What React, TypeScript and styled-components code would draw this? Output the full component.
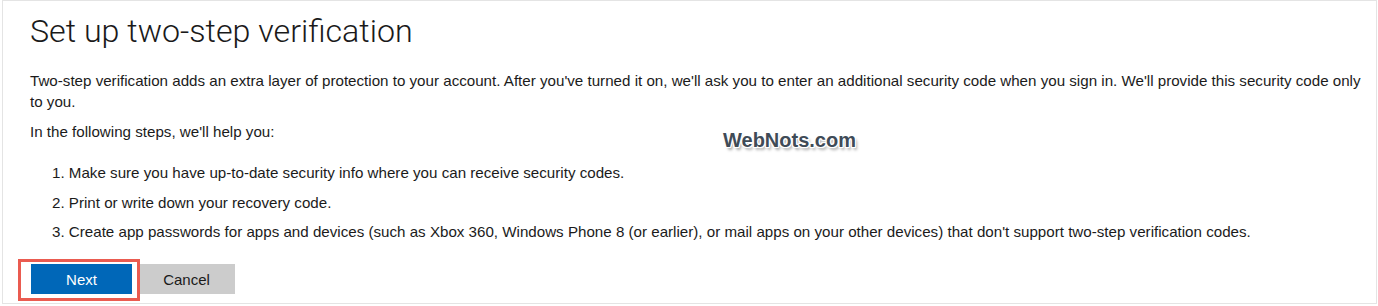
import React from "react";
import styled, { createGlobalStyle } from "styled-components";

const Global = createGlobalStyle`
  html, body { margin: 0; padding: 0; background: #fff; }
  body { font-family: "Liberation Sans", Arial, sans-serif; color: #1b1b1b; }
`;

const Frame = styled.div`
  position: relative;
  box-sizing: border-box;
  margin-left: 2px;
  width: 1375px;
  height: 304px;
  border: 1px solid #e4e4e4;
  padding: 11px 0 0 27px;
`;

const Title = styled.h1`
  margin: 0;
  font-family: Roboto, "Liberation Sans", sans-serif;
  font-weight: 300;
  font-size: 32.2px;
  line-height: 38px;
  color: #1a1a1a;
  letter-spacing: 0;
`;

const Para = styled.p<{ $top: number }>`
  margin: ${(p) => p.$top}px 0 0 0;
  width: 1346px;
  font-size: 15.15px;
  line-height: 21px;
`;

const Steps = styled.ol`
  list-style: none;
  margin: 20px 0 0 0;
  padding: 0 0 0 22px;
  display: flex;
  flex-direction: column;
  gap: 8.5px;
  font-size: 15.15px;
  line-height: 21px;
`;

const ButtonRow = styled.div`
  display: flex;
  align-items: flex-start;
  margin-top: 22px;
`;

const Highlight = styled.div`
  box-sizing: border-box;
  margin: -5px 0 0 -12px;
  padding: 2px 5px 2px 10px;
  border: 3px solid #ea5b50;
  height: 42px;
  display: flex;
  align-items: flex-start;
  position: relative;
  z-index: 1;
`;

const Button = styled.button<{ $primary?: boolean }>`
  box-sizing: border-box;
  height: 30px;
  border: none;
  padding: 0;
  font-family: "Liberation Sans", Arial, sans-serif;
  font-size: 15px;
  width: ${(p) => (p.$primary ? "101px" : "97px")};
  background: ${(p) => (p.$primary ? "#0067b8" : "#cccccc")};
  color: ${(p) => (p.$primary ? "#ffffff" : "#1a1a1a")};
`;

const CancelButton = styled(Button)`
  margin-left: -2px;
`;

const Watermark = styled.div`
  position: absolute;
  left: 720px;
  top: 128px;
  font-family: "Liberation Sans", Arial, sans-serif;
  font-weight: 700;
  font-size: 20px;
  color: #3f4b57;
  text-shadow:
    1px 0 0 #fff, -1px 0 0 #fff, 0 1px 0 #fff, 0 -1px 0 #fff,
    1px 1px 0 #fff, -1px -1px 0 #fff, 1px -1px 0 #fff, -1px 1px 0 #fff,
    2px 3px 3px rgba(0, 0, 0, 0.35);
`;

export default function App() {
  return (
    <>
      <Global />
      <Frame>
        <Title>Set up two-step verification</Title>
        <Para $top={20}>
          Two-step verification adds an extra layer of protection to your account. After you've turned it on, we'll ask you to enter an additional security code when you sign in. We'll provide this security code only to you.
        </Para>
        <Para $top={9}>In the following steps, we'll help you:</Para>
        <Steps>
          <li>1. Make sure you have up-to-date security info where you can receive security codes.</li>
          <li>2. Print or write down your recovery code.</li>
          <li>3. Create app passwords for apps and devices (such as Xbox 360, Windows Phone 8 (or earlier), or mail apps on your other devices) that don't support two-step verification codes.</li>
        </Steps>
        <ButtonRow>
          <Highlight>
            <Button $primary>Next</Button>
          </Highlight>
          <CancelButton>Cancel</CancelButton>
        </ButtonRow>
        <Watermark>WebNots.com</Watermark>
      </Frame>
    </>
  );
}
